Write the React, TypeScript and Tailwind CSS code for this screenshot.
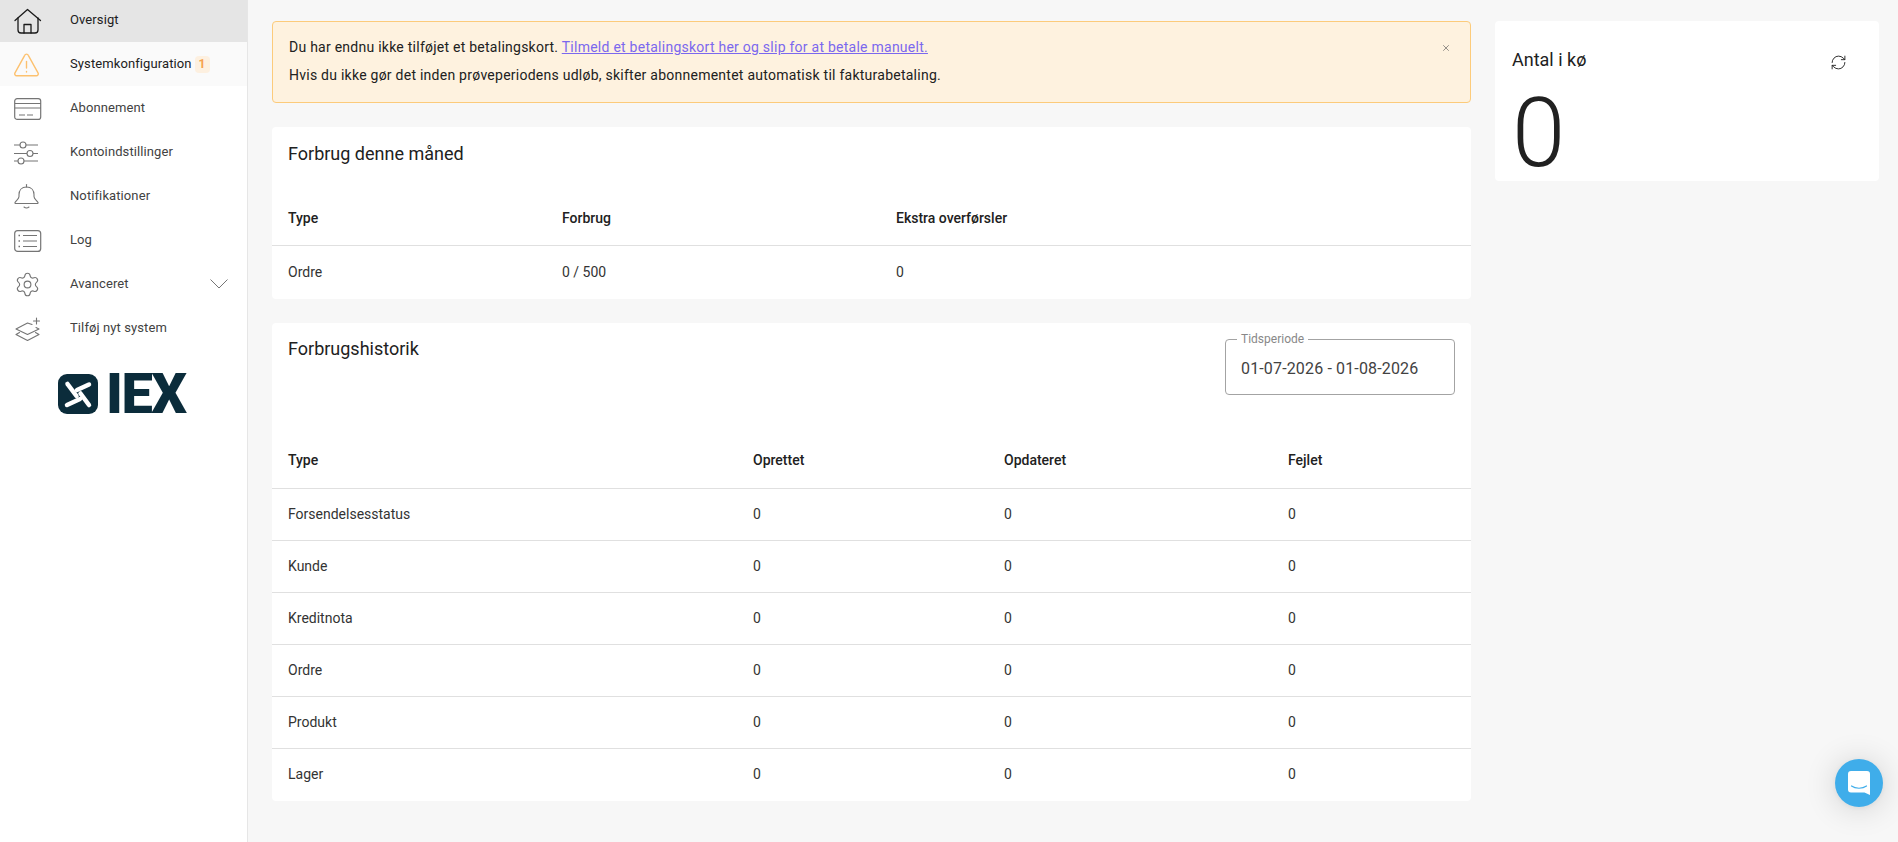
import { ReactNode } from 'react';
import { RefreshCw, Settings, X } from 'lucide-react';

const font = { fontFamily: 'Roboto, sans-serif' };

function HomeIcon() {
  return (
    <svg viewBox="0 0 28 28" className="h-7 w-7" fill="none" stroke="#1a1a1a" strokeWidth="1.3" strokeLinejoin="round" strokeLinecap="round">
      <path d="M1 14.500 13.500 3.500 26.500 14.500" />
      <path d="M4 12v12a3 3 0 0 0 3 3h14a3 3 0 0 0 3-3V12" />
      <path d="M10 27v-8.500h7V27" />
    </svg>
  );
}

function WarningIcon() {
  return (
    <svg viewBox="0 0 28 28" className="h-7 w-7" fill="none" stroke="#fcc16f" strokeWidth="1.4" strokeLinejoin="round" strokeLinecap="round">
      <path d="M10.700 5.300 1 22.800a2 2 0 0 0 1.800 3h19.400a2 2 0 0 0 1.800-3L14.300 5.300a2 2 0 0 0-3.600 0Z" />
      <path d="M12.500 11.500v6.500" />
      <path d="M12.500 21.500v.5" />
    </svg>
  );
}

function CardIcon() {
  return (
    <svg viewBox="0 0 28 28" className="h-7 w-7" fill="none" stroke="#757575" strokeWidth="1.2">
      <rect x="0.700" y="4.600" width="26" height="20.800" rx="2.500" />
      <path d="M1 9.500h26M1 14h26" />
      <path d="M5 21h6M13 21h6" />
    </svg>
  );
}

function SlidersIcon() {
  return (
    <svg viewBox="0 0 28 28" className="h-7 w-7" fill="none" stroke="#757575" strokeWidth="1.100">
      <path d="M0 7h6M12 7h12M0 15.500h13M19 15.500h5M0 23h4M10 23h14" />
      <circle cx="9" cy="7" r="3" />
      <circle cx="16" cy="15.500" r="3" />
      <circle cx="7" cy="23" r="3" />
    </svg>
  );
}

function BellIcon() {
  return (
    <svg viewBox="0 0 28 28" className="h-7 w-7" fill="none" stroke="#757575" strokeWidth="1.100" strokeLinejoin="round" strokeLinecap="round">
      <path d="M12.500 2.500v2.500" />
      <path d="M12.500 5c-5 0-7.500 3.500-7.500 7.500v2c0 2.500-3 4-4 6a.7.7 0 0 0 .6 1h21.800a.7.7 0 0 0 .6-1c-1-2-4-3.500-4-6v-2c0-4-2.500-7.500-7.500-7.500Z" />
      <path d="M10 25c1.500 1.200 3.500 1.200 5 0" />
    </svg>
  );
}

function ListIcon() {
  return (
    <svg viewBox="0 0 28 28" className="h-7 w-7" fill="none" stroke="#757575" strokeWidth="1.200">
      <rect x="0.700" y="4.600" width="26" height="20.800" rx="3" />
      <path d="M9 9.500h14M9 15h14M9 20.500h14" />
      <path d="M4.500 9.500h1.500M4.500 15h1.500M4.500 20.500h1.500" strokeWidth="1.500" />
    </svg>
  );
}

function LayersPlusIcon() {
  return (
    <svg viewBox="0 0 28 28" className="h-7 w-7" fill="none" stroke="#757575" strokeWidth="1.100" strokeLinejoin="round" strokeLinecap="round">
      <path d="M18 10.500 13.500 9 2 15l11.500 5.500L25 15l-3-1.500" />
      <path d="M5.500 18.500 2 20.500l11.500 6 11.500-6-3.500-2" />
      <path d="M22.500 4v6M19.500 7h6" />
    </svg>
  );
}

function LogoMark() {
  return (
    <svg viewBox="0 0 40 40" className="h-10 w-10 shrink-0">
      <rect width="40" height="40" rx="9" fill="#0b2c3b" />
      <g fill="none" stroke="#fff" strokeWidth="4.500" strokeLinecap="round">
        <path d="M9.500 10 18.500 22" />
        <path d="M31 10.500 19 16" />
        <path d="M31 31 22.500 19.500" />
        <path d="M9 31 22 25" />
      </g>
    </svg>
  );
}

const navItems: { label: string; icon: ReactNode; className: string; badge?: string; chevron?: boolean }[] = [
  { label: 'Oversigt', icon: <HomeIcon />, className: 'bg-[#e5e5e5] text-[#212121]' },
  { label: 'Systemkonfiguration', icon: <WarningIcon />, className: 'bg-[#fafafa] text-[#212121]', badge: '1' },
  { label: 'Abonnement', icon: <CardIcon />, className: 'text-[#424242]' },
  { label: 'Kontoindstillinger', icon: <SlidersIcon />, className: 'text-[#424242]' },
  { label: 'Notifikationer', icon: <BellIcon />, className: 'text-[#424242]' },
  { label: 'Log', icon: <ListIcon />, className: 'text-[#424242]' },
  {
    label: 'Avanceret',
    icon: <Settings className="h-[27px] w-[27px] text-[#757575]" strokeWidth={1} />,
    className: 'text-[#424242]',
    chevron: true,
  },
  { label: 'Tilføj nyt system', icon: <LayersPlusIcon />, className: 'text-[#424242]' },
];

const historyRows = ['Forsendelsesstatus', 'Kunde', 'Kreditnota', 'Ordre', 'Produkt', 'Lager'];

function Sidebar() {
  return (
    <aside className="h-full w-[248px] shrink-0 border-r border-[#e6e6e6] bg-white">
      <nav className="-mt-[2px]">
        {navItems.map((item) => (
          <div key={item.label} className={`flex h-[44px] items-center pl-[14px] text-[13px] leading-5 tracking-[0.1px] ${item.className}`}>
            <span className="flex w-[28px] shrink-0 items-center">{item.icon}</span>
            <span className="ml-[28px]">{item.label}</span>
            {item.badge && (
              <span className="ml-[3px] flex h-[17px] w-[15px] items-center justify-center rounded-[4px] bg-[#fdf0e0] text-[12px] font-bold text-[#f6a14c]">
                {item.badge}
              </span>
            )}
            {item.chevron && (
              <svg viewBox="0 0 18 10" className="ml-auto mr-[19px] h-[10px] w-[18px]" fill="none" stroke="#757575" strokeWidth="1">
                <path d="M.5.5 9 9l8.500-8.500" />
              </svg>
            )}
          </div>
        ))}
      </nav>
      <div className="ml-[58px] mt-[24px] flex items-center gap-[8px]">
        <LogoMark />
        <span className="text-[56px] font-black leading-10 tracking-[-1.500px] text-[#0b2c3b]">IEX</span>
      </div>
    </aside>
  );
}

function Alert() {
  return (
    <div className="flex h-[82px] justify-between rounded-[4px] border border-[#fccb7b] bg-[#fef2df] pl-[16px] pr-[19px] pt-[15px] text-[14px] leading-5 tracking-[0.25px] text-[#212121]">
      <div>
        <p>
          Du har endnu ikke tilføjet et betalingskort.{' '}
          <span className="text-[#7b68ee] underline">Tilmeld et betalingskort her og slip for at betale manuelt.</span>
        </p>
        <p className="mt-[8px]">Hvis du ikke gør det inden prøveperiodens udløb, skifter abonnementet automatisk til fakturabetaling.</p>
      </div>
      <X className="mt-[6px] h-[10px] w-[10px] text-[#555555]" strokeWidth={1.500} />
    </div>
  );
}

function UsageCard() {
  return (
    <section className="mt-[24px] rounded-[4px] bg-white">
      <h2 className="h-[63px] pl-[16px] pt-[15px] text-[18px] leading-6 text-[#212121]">Forbrug denne måned</h2>
      <div className="grid h-[56px] grid-cols-[274px_334px_1fr] items-center border-b border-[#e0e0e0] pl-[16px] pt-[2px] text-[14px] font-medium text-[#212121]">
        <span>Type</span>
        <span>Forbrug</span>
        <span>Ekstra overførsler</span>
      </div>
      <div className="grid h-[53px] grid-cols-[274px_334px_1fr] items-center pb-[1px] pl-[16px] text-[14px] text-[#333333]">
        <span>Ordre</span>
        <span>0 / 500</span>
        <span>0</span>
      </div>
    </section>
  );
}

function HistoryCard() {
  return (
    <section className="mt-[24px] rounded-[4px] bg-white">
      <div className="flex h-[109px] items-start justify-between pl-[16px] pr-[16px]">
        <h2 className="pt-[14px] text-[18px] leading-6 text-[#212121]">Forbrugshistorik</h2>
        <fieldset className="mt-[9px] h-[63px] w-[230px] rounded-[4px] border border-[#a3a3a3] pl-[11px]">
          <legend className="px-[4px] text-[12px] leading-[14px] text-[#888888]">Tidsperiode</legend>
          <div className="mt-[11px] pl-[4px] text-[16px] leading-6 tracking-[0.15px] text-[#424242]">01-07-2026 - 01-08-2026</div>
        </fieldset>
      </div>
      <div className="grid h-[56px] grid-cols-[465px_251px_284px_1fr] items-center pl-[16px] text-[14px] font-medium text-[#212121]">
        <span>Type</span>
        <span>Oprettet</span>
        <span>Opdateret</span>
        <span>Fejlet</span>
      </div>
      {historyRows.map((row) => (
        <div key={row} className="grid h-[52px] grid-cols-[465px_251px_284px_1fr] items-center border-t border-[#e0e0e0] pl-[16px] text-[14px] text-[#333333]">
          <span>{row}</span>
          <span>0</span>
          <span>0</span>
          <span>0</span>
        </div>
      ))}
      <div className="h-px" />
    </section>
  );
}

function QueueCard() {
  return (
    <aside className="h-[160px] w-[384px] shrink-0 rounded-[4px] bg-white pl-[17px] pr-[32px] pt-[27px] text-[#212121]">
      <div className="flex items-center justify-between">
        <h2 className="text-[18px] leading-6">Antal i kø</h2>
        <RefreshCw className="mt-[4px] h-[17px] w-[17px]" strokeWidth={1.300} />
      </div>
      <div className="mt-[5px] text-[96px] font-light leading-[112px]">0</div>
    </aside>
  );
}

export default function App() {
  return (
    <div className="flex h-screen overflow-hidden bg-[#f7f7f7]" style={font}>
      <Sidebar />
      <main className="flex flex-1 items-start gap-[24px] pl-[24px] pt-[21px]">
        <div className="w-[1199px] shrink-0">
          <Alert />
          <UsageCard />
          <HistoryCard />
        </div>
        <QueueCard />
      </main>
      <button className="fixed bottom-[35px] right-[15px] flex h-[48px] w-[48px] items-center justify-center rounded-full bg-[#3fadea] shadow-[0_1px_6px_rgba(0,0,0,0.06),0_2px_32px_rgba(0,0,0,0.16)]">
        <svg viewBox="0 0 22 24" className="h-[24px] w-[22px]">
          <path d="M3 0h16a3 3 0 0 1 3 3v21l-5.500-2.500H3a3 3 0 0 1-3-3V3a3 3 0 0 1 3-3Z" fill="#fff" />
          <path d="M3.500 15c4 3 11 3 15 0" fill="none" stroke="#3fadea" strokeWidth="1.200" strokeLinecap="round" />
        </svg>
      </button>
    </div>
  );
}
